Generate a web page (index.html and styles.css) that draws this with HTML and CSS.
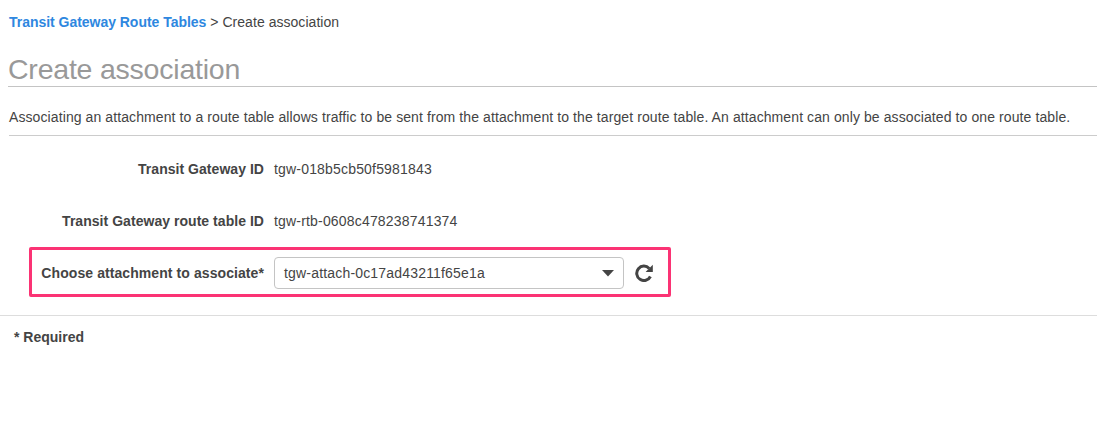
FILE: index.html
```html
<!DOCTYPE html>
<html lang="en">
<head>
<meta charset="utf-8">
<title>Create association</title>
<link rel="stylesheet" href="styles.css">
</head>
<body>
<main class="page">
  <nav class="breadcrumb"><a class="crumb-link" href="#">Transit Gateway Route Tables</a><span class="crumb-current">&gt; Create association</span></nav>
  <h1 class="title"><span class="title-text">Create association</span></h1>
  <p class="intro"><span class="intro-text">Associating an attachment to a route table allows traffic to be sent from the attachment to the target route table. An attachment can only be associated to one route table.</span></p>
  <div class="form">
    <div class="row"><span class="label">Transit Gateway ID</span><span class="value">tgw-018b5cb50f5981843</span></div>
    <div class="row"><span class="label">Transit Gateway route table ID</span><span class="value">tgw-rtb-0608c478238741374</span></div>
    <div class="row highlight">
      <span class="label">Choose attachment to associate*</span>
      <div class="select"><span class="value">tgw-attach-0c17ad43211f65e1a</span><svg class="caret" viewBox="0 0 12 7"><path d="M0 0h12L6 6.5z"/></svg></div>
      <svg class="refresh" viewBox="0 0 18 18"><path class="arc" d="M14.2 4.4A7.2 7.2 0 1 0 15.4 12.5"/><path class="head" d="M17.8 .8v7.2h-7.2z"/></svg>
    </div>
  </div>
  <footer class="required"><span class="required-text">* Required</span></footer>
</main>
</body>
</html>
```
FILE: styles.css
```css
* { box-sizing: border-box; }
body { margin: 0; background: #fff; color: #444; font: 14px/20px "Liberation Sans", Arial, sans-serif; }
.page { display: flex; flex-direction: column; height: 429px; overflow: hidden; white-space: nowrap; }
.breadcrumb { display: flex; gap: 4px; padding: 12px 0 0 9px; height: 50px; }
.crumb-link { color: #2e87df; font-weight: bold; text-decoration: none; letter-spacing: -0.03px; }
.crumb-current { letter-spacing: 0.04px; }
.title { margin: 0 0 0 8px; height: 37px; border-bottom: 1px solid #c4c4c4; color: #999; font-size: 28.5px; font-weight: normal; line-height: 39px; letter-spacing: -0.22px; }
.intro { margin: 0 0 0 9px; height: 49px; padding-top: 20px; border-bottom: 1px solid #ccc; letter-spacing: 0.095px; }
.form { display: flex; flex-direction: column; height: 179px; padding-top: 7px; }
.row { display: flex; align-items: center; height: 52px; gap: 10px; }
.label { width: 264px; text-align: right; font-weight: bold; letter-spacing: 0.04px; }
.value { letter-spacing: 0.18px; }
.highlight { height: 50px; width: 642px; margin-left: 29px; padding-top: 2px; border: 3px solid #fb3374; border-radius: 2px; }
.highlight .label { width: 232px; letter-spacing: 0.08px; }
.select { display: flex; align-items: center; justify-content: space-between; width: 350px; height: 32px; padding: 0 9px; border: 1px solid #c4c4c4; border-radius: 4px; }
.caret { width: 12px; height: 7px; fill: #444; }
.refresh { width: 18px; height: 18px; margin-left: 1px; }
.arc { fill: none; stroke: #444; stroke-width: 3; }
.head { fill: #444; }
.required { border-top: 1px solid #ddd; padding: 11px 0 0 14px; font-weight: bold; }
```
